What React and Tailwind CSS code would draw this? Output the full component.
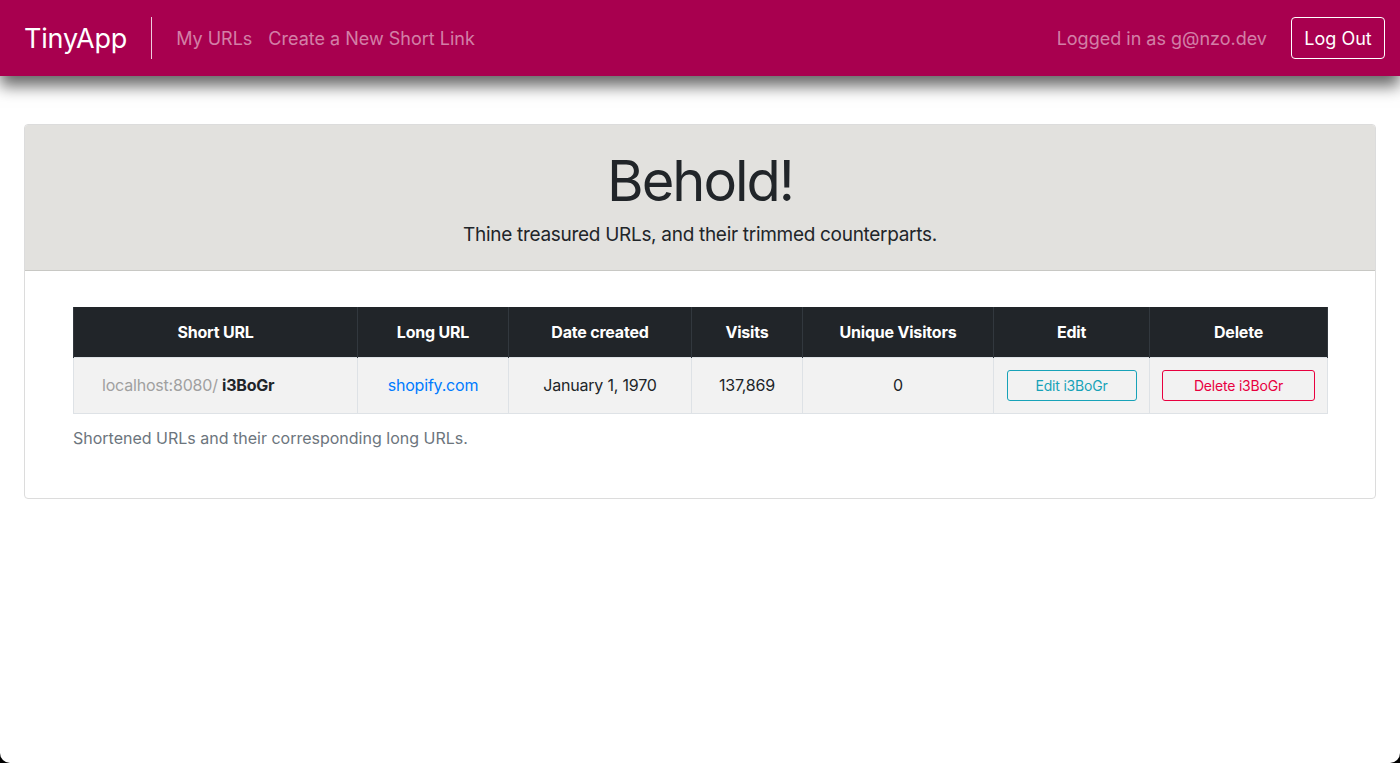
export default function App() {
  const cols = [
    { label: "Short URL", w: "w-[284px]" },
    { label: "Long URL", w: "w-[151px]" },
    { label: "Date created", w: "w-[183px]" },
    { label: "Visits", w: "w-[111px]" },
    { label: "Unique Visitors", w: "w-[191px]" },
    { label: "Edit", w: "w-[156px]" },
    { label: "Delete", w: "w-[178px]" },
  ];
  return (
    <div className="bg-black h-[763px] w-[1400px] overflow-hidden font-['Inter','Liberation_Sans',sans-serif]">
      <div className="bg-white h-full rounded-b-[10px] overflow-hidden">
        <nav className="relative z-10 h-[76px] bg-[#a8004f] flex items-center pl-6 pr-[15px] shadow-[0_10px_15px_rgba(0,0,0,0.6)]">
          <span className="text-white text-[27px] leading-none tracking-[-0.2px]">TinyApp</span>
          <div className="ml-6 mr-6 h-[42px] border-l border-white/80" />
          <a className="text-white/50 text-[18px] mr-4">My URLs</a>
          <a className="text-white/50 text-[18px]">Create a New Short Link</a>
          <div className="ml-auto flex items-center">
            <span className="text-white/50 text-[18px] mr-6">Logged in as g@nzo.dev</span>
            <button className="h-[42px] w-[94px] border border-white rounded-[4px] text-white text-[18px]">
              Log Out
            </button>
          </div>
        </nav>
        <main className="px-6 pt-12">
          <div className="border border-[#dcdcdc] rounded-[4px] overflow-hidden">
            <div className="bg-[#e2e1de] border-b border-[#c8c8c4] h-[146px] flex flex-col items-center pt-[22px]">
              <h1 className="text-[56px] leading-[68px] text-[#212529] tracking-[-2px]">Behold!</h1>
              <p className="mt-[8px] text-[19px] leading-[24px] tracking-[-0.3px] text-[#212529]">
                Thine treasured URLs, and their trimmed counterparts.
              </p>
            </div>
            <div className="px-12 pt-9 pb-12">
              <table className="table-fixed border-collapse w-[1254px] text-[16px] tracking-[-0.2px] text-[#212529]">
                <thead>
                  <tr className="bg-[#212529] h-[50px]">
                    {cols.map((c) => (
                      <th
                        key={c.label}
                        className={`${c.w} border-x border-[#32383e] text-white font-bold text-center`}
                      >
                        {c.label}
                      </th>
                    ))}
                  </tr>
                </thead>
                <tbody>
                  <tr className="bg-[#f2f2f2] h-[56px] text-center">
                    <td className="border border-[#dee2e6] text-left pl-[28px]">
                      <span className="text-[#a0a0a0]">localhost:8080/ </span>
                      <span className="font-bold">i3BoGr</span>
                    </td>
                    <td className="border border-[#dee2e6]">
                      <a className="text-[#007bff]">shopify.com</a>
                    </td>
                    <td className="border border-[#dee2e6]">January 1, 1970</td>
                    <td className="border border-[#dee2e6]">137,869</td>
                    <td className="border border-[#dee2e6]">0</td>
                    <td className="border border-[#dee2e6]">
                      <button className="w-[130px] h-[31px] border border-[#17a2b8] rounded-[3px] text-[#17a2b8] text-[14px]">
                        Edit i3BoGr
                      </button>
                    </td>
                    <td className="border border-[#dee2e6]">
                      <button className="w-[153px] h-[31px] border border-[#e8003f] rounded-[3px] text-[#e8003f] text-[14px]">
                        Delete i3BoGr
                      </button>
                    </td>
                  </tr>
                </tbody>
              </table>
              <p className="mt-3 text-[16px] text-[#6c757d]">
                Shortened URLs and their corresponding long URLs.
              </p>
            </div>
          </div>
        </main>
      </div>
    </div>
  );
}
